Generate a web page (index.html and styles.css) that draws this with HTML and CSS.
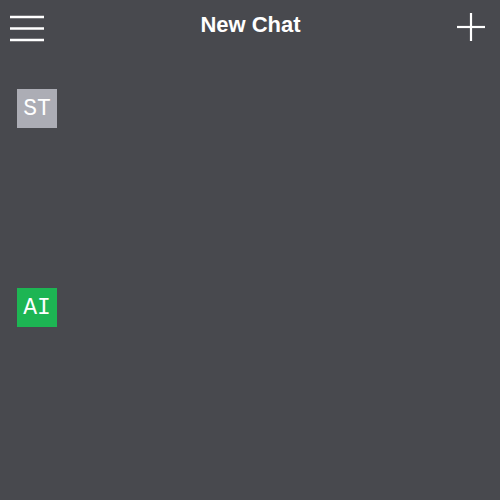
FILE: index.html
```html
<!DOCTYPE html>
<html>
<head>
<meta charset="utf-8">
<link rel="stylesheet" href="styles.css">
</head>
<body>
<div class="app">
  <header class="topbar">
    <button class="icon-btn menu" aria-label="Menu">
      <svg width="36" height="28" viewBox="0 0 36 28"><g stroke="#fff" stroke-width="2.5" stroke-linecap="butt"><line x1="1" y1="3" x2="35" y2="3"/><line x1="1" y1="14.5" x2="35" y2="14.5"/><line x1="1" y1="26" x2="35" y2="26"/></g></svg>
    </button>
    <h1 class="title">New Chat</h1>
    <button class="icon-btn plus" aria-label="New">
      <svg width="30" height="30" viewBox="0 0 30 30"><g stroke="#fff" stroke-width="2.2"><line x1="1" y1="15" x2="29" y2="15"/><line x1="15" y1="1" x2="15" y2="29"/></g></svg>
    </button>
  </header>
  <main class="messages">
    <div class="msg user"><div class="avatar st">ST</div></div>
    <div class="msg ai"><div class="avatar ai-av">AI</div></div>
  </main>
</div>
</body>
</html>
```
FILE: styles.css
```css
html, body {
  margin: 0;
  padding: 0;
  background: #48494e;
  height: 100%;
}
.app {
  width: 500px;
  height: 500px;
  background: #48494e;
}
.topbar {
  height: 50px;
  display: flex;
  align-items: center;
  justify-content: space-between;
  padding: 0 14px 0 9px;
  box-sizing: border-box;
}
.icon-btn {
  background: none;
  border: 0;
  padding: 0;
  display: flex;
  cursor: pointer;
}
.menu { margin-top: 6px; }
.plus { margin-top: 4px; }
.title {
  margin: 0;
  font-family: "Liberation Sans", Arial, sans-serif;
  font-weight: bold;
  font-size: 22px;
  color: #fff;
  margin-top: -1px;
}
.messages {
  padding: 39px 17px 0;
}
.msg {
  height: 199px;
}
.avatar {
  width: 40px;
  height: 39px;
  display: flex;
  align-items: center;
  justify-content: center;
  font-family: "Liberation Mono", "Courier New", monospace;
  font-size: 23px;
  color: #fff;
}
.st { background: #acadb5; }
.ai-av { background: #1db553; }
```
